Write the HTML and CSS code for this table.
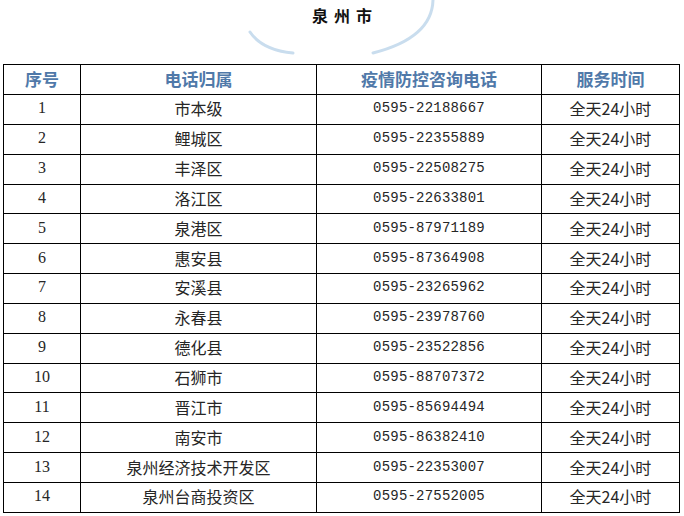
FILE: index.html
```html
<!DOCTYPE html>
<html lang="zh-CN">
<head>
<meta charset="utf-8">
<title>泉州市</title>
<link rel="stylesheet" href="styles.css">
</head>
<body>
<div class="title-block">
  <svg class="swoosh" width="684" height="64" viewBox="0 0 684 64" aria-hidden="true">
    <path d="M250 32 Q262 50 293 53" fill="none" stroke="#c9ddee" stroke-width="3" stroke-linecap="round"/>
    <path d="M433 0 Q432 38 373 53" fill="none" stroke="#c9ddee" stroke-width="3" stroke-linecap="round"/>
  </svg>
  <h1 class="title">泉州市</h1>
</div>
<table class="tbl">
  <colgroup>
    <col class="c1"><col class="c2"><col class="c3"><col class="c4">
  </colgroup>
  <thead>
    <tr><th>序号</th><th>电话归属</th><th>疫情防控咨询电话</th><th>服务时间</th></tr>
  </thead>
  <tbody>
    <tr><td class="num">1</td><td>市本级</td><td class="tel">0595-22188667</td><td>全天24小时</td></tr>
    <tr><td class="num">2</td><td>鲤城区</td><td class="tel">0595-22355889</td><td>全天24小时</td></tr>
    <tr><td class="num">3</td><td>丰泽区</td><td class="tel">0595-22508275</td><td>全天24小时</td></tr>
    <tr><td class="num">4</td><td>洛江区</td><td class="tel">0595-22633801</td><td>全天24小时</td></tr>
    <tr><td class="num">5</td><td>泉港区</td><td class="tel">0595-87971189</td><td>全天24小时</td></tr>
    <tr><td class="num">6</td><td>惠安县</td><td class="tel">0595-87364908</td><td>全天24小时</td></tr>
    <tr><td class="num">7</td><td>安溪县</td><td class="tel">0595-23265962</td><td>全天24小时</td></tr>
    <tr><td class="num">8</td><td>永春县</td><td class="tel">0595-23978760</td><td>全天24小时</td></tr>
    <tr><td class="num">9</td><td>德化县</td><td class="tel">0595-23522856</td><td>全天24小时</td></tr>
    <tr><td class="num">10</td><td>石狮市</td><td class="tel">0595-88707372</td><td>全天24小时</td></tr>
    <tr><td class="num">11</td><td>晋江市</td><td class="tel">0595-85694494</td><td>全天24小时</td></tr>
    <tr><td class="num">12</td><td>南安市</td><td class="tel">0595-86382410</td><td>全天24小时</td></tr>
    <tr><td class="num">13</td><td>泉州经济技术开发区</td><td class="tel">0595-22353007</td><td>全天24小时</td></tr>
    <tr><td class="num">14</td><td>泉州台商投资区</td><td class="tel">0595-27552005</td><td>全天24小时</td></tr>
  </tbody>
</table>
</body>
</html>
```
FILE: styles.css
```css
html, body {
  margin: 0;
  padding: 0;
  background: #ffffff;
}
body {
  font-family: "Noto Sans CJK SC", "Liberation Sans", sans-serif;
  color: #1a1a1a;
}
.title-block {
  position: relative;
  height: 64px;
  display: flex;
  justify-content: center;
}
.swoosh {
  position: absolute;
  left: 0;
  top: 0;
}
.title {
  position: relative;
  margin: 4px 0 0 6px;
  font-size: 16px;
  line-height: 22px;
  font-weight: 700;
  letter-spacing: 6px;
  color: #111111;
}
.tbl {
  margin-left: 3px;
  width: 676px;
  border-collapse: collapse;
  table-layout: fixed;
}
.c1 { width: 77px; }
.c2 { width: 236px; }
.c3 { width: 225px; }
.c4 { width: 138px; }
.tbl th, .tbl td {
  border: 1px solid #000000;
  padding: 0 0 2px 0;
  text-align: center;
  height: 26.85px;
  line-height: 20px;
  white-space: nowrap;
}
.tbl th {
  font-size: 17px;
  font-weight: 700;
  color: #5079a9;
  height: 27px;
}
.tbl td {
  font-size: 16px;
  color: #262626;
}
.tbl td.tel {
  font-family: "Liberation Mono", "Noto Sans CJK SC", monospace;
  font-size: 14px;
  letter-spacing: 0.2px;
}
.tbl td.num {
  font-family: "Liberation Serif", "Noto Sans CJK SC", serif;
  font-size: 16px;
}
```
